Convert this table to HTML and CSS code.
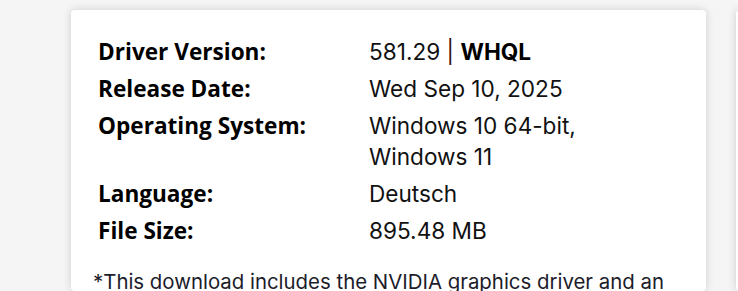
FILE: index.html
```html
<!DOCTYPE html>
<html lang="de">
<head>
<meta charset="utf-8">
<title>Driver Details</title>
<link rel="stylesheet" href="styles.css">
</head>
<body>
<div class="page">
  <section class="card">
    <dl class="specs">
      <div class="row"><dt>Driver Version:</dt><dd>581.29 <span class="pipe">|</span> <b>WHQL</b></dd></div>
      <div class="row"><dt>Release Date:</dt><dd>Wed Sep 10, 2025</dd></div>
      <div class="row"><dt>Operating System:</dt><dd>Windows 10 64-bit,<br>Windows 11</dd></div>
      <div class="row"><dt>Language:</dt><dd>Deutsch</dd></div>
      <div class="row"><dt>File Size:</dt><dd>895.48 MB</dd></div>
    </dl>
    <p class="note">*This download includes the NVIDIA graphics driver and an NVIDIA App.</p>
  </section>
  <section class="card card-side"></section>
</div>
</body>
</html>
```
FILE: styles.css
```css
html, body {
  margin: 0;
  padding: 0;
  background: #f5f5f5;
  overflow: hidden;
}
.page {
  display: flex;
  gap: 30px;
  padding: 10px 0 0 71px;
  height: 291px;
  box-sizing: border-box;
}
.card {
  flex: 0 0 635px;
  min-width: 0;
  background: #fff;
  border-radius: 4px;
  box-shadow: 0 0 9px rgba(0, 0, 0, 0.16);
  padding: 26px 22px 0 22px;
  box-sizing: border-box;
}
.card-side {
  flex: 0 0 300px;
}
.specs {
  margin: 0;
  padding: 0 0 0 5px;
  display: flex;
  flex-direction: column;
  gap: 6px;
}
.row {
  display: flex;
  align-items: baseline;
}
dt {
  flex: 0 0 271px;
  font-family: "Open Sans", sans-serif;
  font-weight: 700;
  font-size: 22.6px;
  line-height: 31px;
  color: #000;
}
dd {
  margin: 0;
  font-family: Inter, sans-serif;
  font-size: 22.6px;
  line-height: 31px;
  color: #111;
}
dd b {
  font-weight: 700;
  color: #000;
}
.pipe {
  color: #3a1010;
}
.note {
  margin: 20px 0 0 0;
  font-family: Inter, sans-serif;
  font-size: 20.4px;
  line-height: 31px;
  color: #1c1c2a;
}
```
